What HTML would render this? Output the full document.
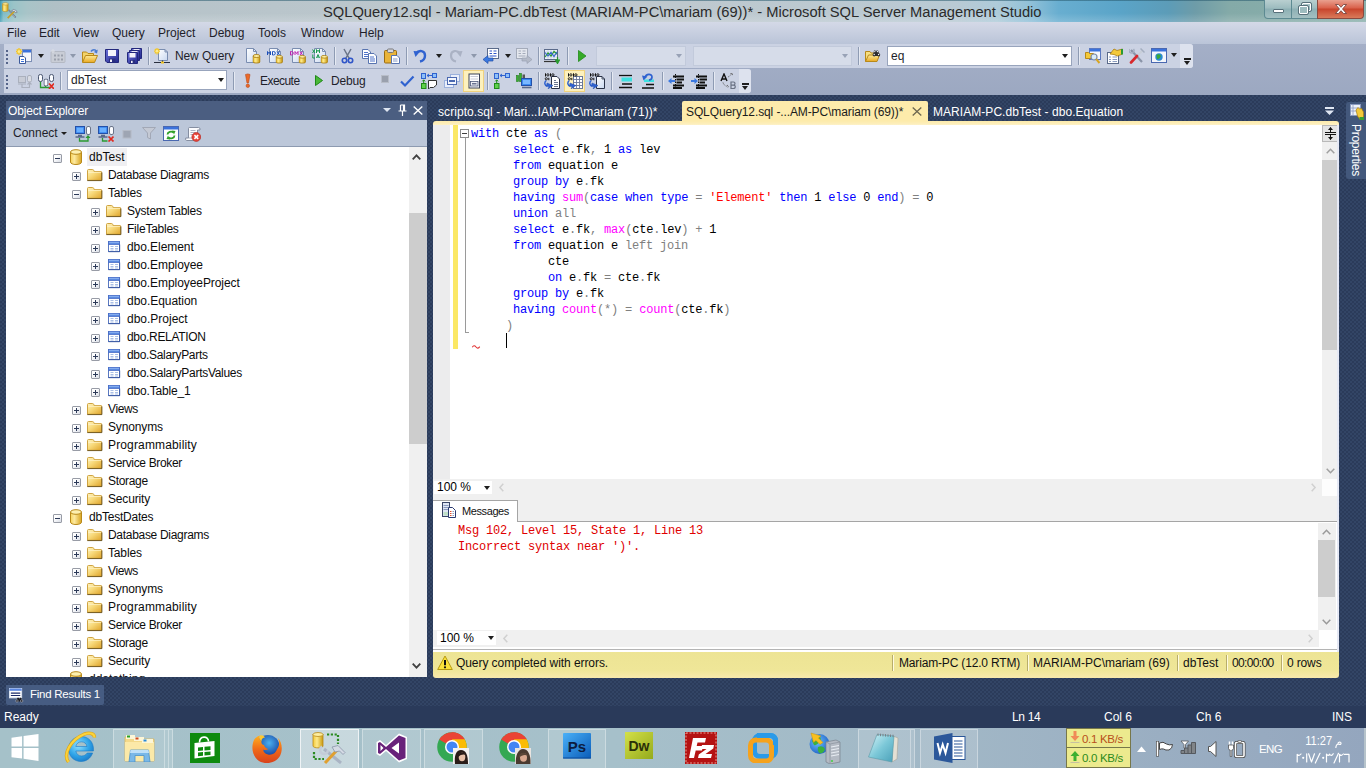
<!DOCTYPE html>
<html>
<head>
<meta charset="utf-8">
<title>SQLQuery12.sql - Microsoft SQL Server Management Studio</title>
<style>
*{box-sizing:border-box;margin:0;padding:0}
html,body{width:1366px;height:768px;overflow:hidden}
body{font-family:"Liberation Sans",sans-serif;font-size:11.5px;color:#1b1b1b;position:relative;background:#2b3b5a}
.a,.a *{position:absolute}
svg{display:block;overflow:visible}
.s{white-space:nowrap;line-height:16px}
#dots{left:0;top:95px;width:1366px;height:611px;background-color:#2b3b5a;
 background-image:radial-gradient(circle at 1px 1px,#384b6e 0.5px,transparent 1px),radial-gradient(circle at 3px 3px,#384b6e 0.5px,transparent 1px);background-size:4px 4px}
/* title bar */
#title{left:0;top:0;width:1366px;height:22px;background:linear-gradient(rgba(40,90,110,.55) 0,rgba(40,90,110,.55) 1px,rgba(255,255,255,0) 1px,rgba(255,255,255,0) 60%,rgba(255,255,255,.18) 100%),linear-gradient(90deg,#3f9ab2 0,#7fbcc6 .25%,#9ac4c8 1%,#a8c4c8 2%,#b0c0c6 4%,#b6c3c9 10%,#bcc7cd 30%,#bec8ce 50%,#b9cad4 70%,#aecbd9 73%,#8fc0d8 75.5%,#68aed0 77.5%,#5aa4c8 82%,#5c9cb8 85.5%,#6e9ca8 87.5%,#84aaa8 90%,#8ab0ac 100%)}
#title .t{left:323px;top:2px;font-size:14.7px;color:#2a2a2a;line-height:20px;white-space:nowrap}
/* menu */
#menu{left:0;top:22px;width:1366px;height:22px;background:linear-gradient(#d4d9e7,#bac4d8)}
#menu span{top:3px;font-size:12px;color:#1e1e2a;line-height:16px;white-space:nowrap}
#tray{left:0;top:44px;width:1366px;height:51px;background:linear-gradient(#a4afc7,#9ca8c1)}
.tb{background:#cbd2e3;border-radius:0 3px 3px 0;height:24px}
.grip{width:2px;height:14px;top:6px;left:2px;background-image:linear-gradient(#55648a 2px,transparent 2px);background-size:2px 4px;}
.sep{width:1px;height:18px;top:3px;background:#8e9bb3;box-shadow:1px 0 0 #e6eaf3}
.combo{background:#fff;border:1px solid #98a4bc;height:20px;top:2px}
.combo.dis{background:#d6dce9;border-color:#c2cadb}
.ddarrow{width:0;height:0;border:3.5px solid transparent;border-top:4px solid #1e1e1e;border-bottom:0}
.tbtxt{top:4px;font-size:12px;line-height:16px;white-space:nowrap;color:#1e1e2a}
.hot{background:#fdf1bd;border:1px solid #f0d27e}
/* object explorer */
#oe{left:6px;top:101px;width:421px;height:576px;background:#fff;overflow:hidden}
#oehead{left:0;top:0;width:421px;height:19px;background:#4b5e81;color:#fff}
#oetb{left:0;top:19px;width:421px;height:27px;background:#bcc7d9;border-bottom:1px solid #8d9ab0}
.row{left:0;height:18px;width:400px}
.row span{top:1px;line-height:16px;white-space:nowrap;font-size:12px;color:#0c0c0c}
.pm{width:9px;height:9px;border:1px solid #989ca6;background:linear-gradient(135deg,#fff 30%,#d9dde6);border-radius:1px;top:6px}
.pm:before{content:"";position:absolute;left:1px;top:3px;width:5px;height:1px;background:#2c3a58}
.pm.p:after{content:"";position:absolute;left:3px;top:1px;width:1px;height:5px;background:#2c3a58}
.ic{top:1px;width:16px;height:16px}
/* editor */
.mono{font-family:"Liberation Mono",monospace}
#code div{left:38px;height:16px;line-height:16px;font-size:12px;letter-spacing:-0.2px;white-space:pre;color:#000}
.k{color:#0000ff}.g{color:#808080}.f{color:#ff00ff}.r{color:#ff0000}
#msg div{left:25px;height:15px;line-height:15px;font-size:12px;letter-spacing:-0.2px;white-space:pre;color:#e00000}
.sbtn{background:#f0f0f0}
.st span{top:3px;line-height:16px;white-space:nowrap;font-size:12px;color:#111}
.st i{top:3px;width:1px;height:16px;background:#b8ad6a;box-shadow:1px 0 0 #fffbe0}
/* taskbar */
#task{left:0;top:728px;width:1366px;height:40px;background:linear-gradient(90deg,#a5c1c9,#a6c0ca 45%,#a1b7c6 70%,#9aaec2 85%,#94a6be)}
.tbtn{top:1px;height:39px;background:rgba(255,255,255,.13);border:1px solid rgba(255,255,255,.35);border-bottom:0}
#code span{position:static}

</style>
</head>
<body>
<svg width="0" height="0" style="position:absolute">
<defs>
<linearGradient id="gfold" x1="0" y1="0" x2="1" y2="1"><stop offset="0" stop-color="#fff4c0"/><stop offset=".45" stop-color="#f7d878"/><stop offset="1" stop-color="#dfa42c"/></linearGradient>
<linearGradient id="gdb" x1="0" y1="0" x2="1" y2="0"><stop offset="0" stop-color="#f7d35a"/><stop offset=".35" stop-color="#fdeaa0"/><stop offset="1" stop-color="#d9a520"/></linearGradient>
<symbol id="folder" viewBox="0 0 16 16"><path d="M0.500 14.300 V4.500 Q0.500 3.500 1.500 3.500 H5.500 Q6.500 3.500 6.800 4.500 L7 5.500 H14 Q14.600 5.500 14.600 6.300 V14.300 Z" fill="url(#gfold)" stroke="#c99a30" stroke-width=".9"/><path d="M1.200 6.300 H14" stroke="#fff6cf" stroke-width=".9" opacity=".9"/><path d="M0.300 14.600 H14.900 V6.500" fill="none" stroke="#4a3608" stroke-width=".9" opacity=".8"/></symbol>
<symbol id="db" viewBox="0 0 16 16"><path d="M2.5 3 v10 c0 1.6 2.4 2.5 5.5 2.5 s5.500 -.9 5.500 -2.500 v-10" fill="url(#gdb)" stroke="#b8891a" stroke-width="1"/><ellipse cx="8" cy="3" rx="5.500" ry="2.300" fill="#fdf0b0" stroke="#b8891a" stroke-width="1"/></symbol>
<symbol id="table" viewBox="0 0 16 16"><rect x="2.500" y="3.500" width="11" height="10" fill="#fff" stroke="#5a78c0"/><rect x="2.500" y="3.500" width="11" height="3" fill="#5a8ae0" stroke="#4a6ec8" stroke-width=".8"/><path d="M3 4.300 H13" stroke="#9cc0f8" stroke-width=".8"/><path d="M4.500 8.500 H7.500 M9 8.500 H12 M4.500 10.500 H7.500 M9 10.500 H12 M4.500 12 H7.500 M9 12 H12" stroke="#a9bfe6" stroke-width="1"/><path d="M2.500 13.700 H13.700 V6.500" fill="none" stroke="#34509a" stroke-width=".8"/></symbol>
<symbol id="appicon" viewBox="0 0 18 18"><path d="M0.500 2 V9 C0.500 10.500 6.500 10.500 6.500 9 V2" fill="url(#gcyl)" stroke="#b8891a" stroke-width=".6"/><ellipse cx="3.500" cy="2" rx="3" ry="1.200" fill="#fdeea0" stroke="#b8891a" stroke-width=".6"/><path d="M7 8.500 L14.500 16.500" stroke="#5a6478" stroke-width="1.500"/><path d="M7.300 8.800 L14.200 16.200" stroke="#e8ecf4" stroke-width=".6"/><path d="M14 9 L6 17" stroke="#c8a028" stroke-width="1.800"/><path d="M10 9.500 Q12 6.500 15 9 L16 11 L14.500 11.500 L13.500 10 Z" fill="#e4e8f0" stroke="#5a6478" stroke-width=".6"/></symbol>
<symbol id="msgicon" viewBox="0 0 16 16"><rect x="1.500" y="0.500" width="7" height="14" fill="#dfe6f4" stroke="#3a4668"/><path d="M2.500 3.500 H7.500 M2.500 5.500 H7.500 M2.500 7.500 H7.500" stroke="#8a9abf" stroke-width="1"/><rect x="2.500" y="10" width="5" height="3.500" fill="#bfe0c8"/><path d="M7.500 5.500 H11.500 L14.500 8.500 V15.500 H7.500 Z" fill="#fff" stroke="#2a3a70"/><path d="M9 9.500 H10.500 M9 11.500 H10.500 M9 13.500 H10.500" stroke="#e0502a" stroke-width="1"/><path d="M11.500 9.500 H13 M11.500 11.500 H13 M11.500 13.500 H13" stroke="#8a9abf" stroke-width="1"/></symbol>
<symbol id="propicon" viewBox="0 0 16 16"><rect x="1.500" y="0.500" width="10" height="11" fill="#eef2fa" stroke="#8a9ac0"/><path d="M4 1 V11 M1.500 4 H11.500 M1.500 7 H11.500" stroke="#8a9ac0" stroke-width=".8"/><path d="M7 6 L9 3.500 L10.500 5 L12.500 4.500 L14.500 8 V13 L11 15.500 L8.500 12 Z" fill="#f3c93a" stroke="#a87c10" stroke-width=".7"/><rect x="10.500" y="13" width="4.500" height="3" fill="#3aa030"/></symbol>
<symbol id="findres" viewBox="0 0 16 16"><rect x="0.500" y="0.500" width="13" height="10" fill="#fff" stroke="#dfe6f2"/><rect x="0.500" y="0.500" width="13" height="2.500" fill="#5a86e0"/><path d="M2 5.500 H12 M2 8 H12" stroke="#1a2a6a" stroke-width="1.200"/><path d="M7.500 14.500 L9 10.500 H10.500 L11 12 L11.500 10.500 H13 L14.500 14.500 Z" fill="#1a1a20"/><circle cx="8.500" cy="13.800" r="1.300" fill="#1a1a20" stroke="#dfe6f2" stroke-width=".5"/><circle cx="13.500" cy="13.800" r="1.300" fill="#1a1a20" stroke="#dfe6f2" stroke-width=".5"/></symbol>
<symbol id="tflag" viewBox="0 0 18 18"><path d="M1.500 1 V16.500" stroke="#444" stroke-width="3"/><path d="M1.500 1.500 V16" stroke="#fff" stroke-width="1.600"/><path d="M3.500 3 Q7 1 10.500 4 Q13.500 5.500 16.500 4.500 Q16.500 8.500 13 10 Q9.500 10.500 7.500 9 Q5.500 8.500 3.500 9.500 Z" fill="#fff" stroke="#444" stroke-width="1"/></symbol>
<symbol id="tnet" viewBox="0 0 18 16"><path d="M1 13.500 V10.500 H4.500 V8 H8 V5 H11.500 V2.500 H15.500 V13.500 Z" fill="#808488" stroke="#55595e" stroke-width="1"/><path d="M4.500 10.500 V13.500 M8 8 V13.500 M11.500 5 V13.500" stroke="#55595e" stroke-width="1"/><path d="M1 1 H8.500 L5.500 4.500 V8 H4 V4.500 Z" fill="#fff" stroke="#55595e" stroke-width=".8"/></symbol>
<symbol id="tvol" viewBox="0 0 12 18"><path d="M1.500 6.500 H3.500 L9 1.500 V16.500 L3.500 11.500 H1.500 Z" fill="#fff" stroke="#555" stroke-width="1"/></symbol>
<symbol id="tpow" viewBox="0 0 18 18"><rect x="7.500" y="2.500" width="8.500" height="14" rx="1" fill="none" stroke="#444" stroke-width="3"/><rect x="7.500" y="2.500" width="8.500" height="14" rx="1" fill="none" stroke="#fff" stroke-width="1.600"/><rect x="10" y="0.800" width="3.500" height="1.700" fill="#fff" stroke="#444" stroke-width=".6"/><path d="M1.500 1.500 V5 M4.500 1.500 V5" stroke="#fff" stroke-width="1.500"/><path d="M0.500 5 H5.500 V8.500 Q5.500 10 3.800 10 V16.500 H2.200 V10 Q0.500 10 0.500 8.500 Z" fill="#fff" stroke="#444" stroke-width=".7"/></symbol>
<symbol id="clock" viewBox="0 0 58 34"><text x="11.200" y="12.800" font-family="Liberation Sans" font-size="12" fill="#fff" textLength="27" lengthAdjust="spacingAndGlyphs">11:27</text><path d="M47 12 Q47.300 10 45.500 10 Q43.800 10.200 44 12 Q45 12.600 47.200 12.200 M44 12 Q42 12.500 41.800 16" fill="none" stroke="#fff" stroke-width="1.100"/><g fill="none" stroke="#fff" stroke-width="1.200" stroke-linecap="round" stroke-linejoin="round"><path d="M3.200 30 V22.300 Q5 24.500 7 22"/><path d="M12.700 21.800 V30"/><path d="M14.600 21.800 L17.500 30 L20.500 21.800"/><path d="M26 21.300 L21.300 31"/><path d="M32.500 30 V22 Q34 24.800 35.700 22.200 Q37.300 24.800 39.200 21.700"/><path d="M44.500 21.300 L40 31"/><path d="M45.500 30 V22.300 Q47.300 24.500 49.300 22"/><path d="M50.500 22.400 H55 V30"/></g><circle cx="9.200" cy="25.800" r="1.100" fill="#fff"/><circle cx="29.200" cy="25.800" r="1.100" fill="#fff"/></symbol>
<symbol id="monitor" viewBox="0 0 10 12"><rect x="0.500" y="0.500" width="9" height="7" fill="#3b8af0" stroke="#2450a8"/><rect x="1.800" y="1.800" width="6.400" height="4.400" fill="#6ab0ff"/><path d="M3 9.500 H7 M0.500 11 H9.500" stroke="#5a6a8a" stroke-width="1.300"/></symbol>
<symbol id="oeconn" viewBox="0 0 16 16"><use href="#monitor" x="0" y="0" width="10" height="12"/><rect x="11.500" y="0.500" width="4" height="8" rx="1.500" fill="#fbfcff" stroke="#6a7488"/><path d="M4.500 12 V15 H13 V11" fill="none" stroke="#2a9a30" stroke-width="1.300"/><path d="M10.500 12 L13 9 L15.500 12 Z" fill="#2a9a30"/></symbol>
<symbol id="oedisc" viewBox="0 0 16 16"><use href="#monitor" x="0" y="0" width="10" height="12"/><rect x="11.500" y="0.500" width="4" height="8" rx="1.500" fill="#fbfcff" stroke="#6a7488"/><path d="M4.500 12 V15 H9.500" fill="none" stroke="#2a9a30" stroke-width="1.300"/><path d="M10.500 10.500 L15.500 15.500 M15.500 10.500 L10.500 15.500" stroke="#e02a20" stroke-width="1.700"/></symbol>
<symbol id="oestop" viewBox="0 0 16 16"><rect x="4" y="4.500" width="8" height="7.500" fill="#9ea5b3" stroke="#b4bac6"/></symbol>
<symbol id="oefilter" viewBox="0 0 16 16"><path d="M1.500 1.500 H14.500 L9.500 7 V13 L6.500 11.500 V7 Z" fill="#c4c9d4" stroke="#a2a8b6" stroke-linejoin="round"/></symbol>
<symbol id="oerefresh" viewBox="0 0 16 16"><rect x="0.500" y="0.500" width="15" height="14" fill="#fdfdff" stroke="#4a68b0"/><rect x="1" y="1" width="14" height="2.500" fill="#3b72dc"/><path d="M4.500 8.500 A3.500 3 0 0 1 10.500 6.500" fill="none" stroke="#2fa028" stroke-width="1.800"/><path d="M9 4.500 L12.500 5 L11 8.500 Z" fill="#2fa028"/><path d="M11.500 9.500 A3.500 3 0 0 1 5.500 11.500" fill="none" stroke="#2fa028" stroke-width="1.800"/><path d="M7 13.500 L3.500 13 L5 9.500 Z" fill="#2fa028"/></symbol>
<symbol id="oescript" viewBox="0 0 16 16"><path d="M4.500 1.500 H13.500 Q15.500 1.500 15 4 H12.500 V12.500 Q12.500 14.500 10.500 14.500 H1.500 Q0.300 14.500 0.700 12 H3.500 V2.500 Q3.500 1.500 4.500 1.500 Z" fill="#fcfcfe" stroke="#7a8498" stroke-width=".9"/><path d="M3.500 12 H10.500 Q10.200 13.500 10.800 14.300" fill="none" stroke="#9aa2b4" stroke-width=".8"/><path d="M5.500 4.500 H10.500 M5.500 6.500 H10.500 M5.500 8.500 H9" stroke="#a4acbc" stroke-width=".9"/><circle cx="11.300" cy="11" r="4.400" fill="#e8453a" stroke="#b82a22" stroke-width=".7"/><path d="M9.400 9.100 L13.200 12.900 M13.200 9.100 L9.400 12.900" stroke="#fff" stroke-width="1.500"/></symbol>
<radialGradient id="gie" cx=".4" cy=".35" r=".7"><stop offset="0" stop-color="#8fe0ff"/><stop offset=".6" stop-color="#2fa4e8"/><stop offset="1" stop-color="#1a7ac8"/></radialGradient>
<radialGradient id="gffg" cx=".55" cy=".35" r=".6"><stop offset="0" stop-color="#4ab0f0"/><stop offset="1" stop-color="#143c9a"/></radialGradient>
<linearGradient id="gfff" x1="0" y1="0" x2="0" y2="1"><stop offset="0" stop-color="#ffb020"/><stop offset=".5" stop-color="#f06a18"/><stop offset="1" stop-color="#d8421c"/></linearGradient>
<symbol id="winlogo" viewBox="0 0 28 28"><path d="M0 4 L11 2.300 V13 H0 Z M12.500 2 L28 0 V13 H12.500 Z M0 14.500 H11 V25.500 L0 24 Z M12.500 14.500 H28 V28 L12.500 25.700 Z" fill="#fff"/></symbol>
<symbol id="ie" viewBox="0 0 34 33"><path d="M29.400 20 L11.800 20 C12.300 23 14.500 25 17.500 25 C20 25 22 24 23.200 22 L28.600 22 C26.800 27.200 22.500 30.500 17 30.500 C10 30.500 4.500 25 4.500 18 C4.500 11 10 5.500 17 5.500 C24.500 5.500 29.500 11 29.500 18.500 Z M11.800 15.500 C12.300 12.500 14.500 10.800 17.300 10.800 C20.300 10.800 22.500 12.500 23 15.500 Z" fill="url(#gie)" fill-rule="evenodd" stroke="#1a7ac8" stroke-width=".6"/><path d="M4.500 31 C-1.500 23 7 8.500 20 3.200 C26 1 30.500 2.500 30.500 6.500" fill="none" stroke="#e0a818" stroke-width="3.400"/><path d="M4.500 31 C-1.500 23 7 8.500 20 3.200 C26 1 30.500 2.500 30.500 6.500" fill="none" stroke="#fbd23a" stroke-width="2"/></symbol>
<symbol id="explorer" viewBox="0 0 33 28"><path d="M2 3 H10 L12 5 H31 V27 H2 Z" fill="#f3d98a" stroke="#d9b860" stroke-width=".8"/><path d="M2 8 H31 V27 H2 Z" fill="#fbe9a8"/><path d="M3 1 H12 V5 H3 Z" fill="#fdf6d8"/><path d="M11 3 H21 V7 H11 Z" fill="#fdf6d8"/><path d="M19 5 H30 V9 H19 Z" fill="#fdf6d8"/><rect x="4" y="1.500" width="3" height="2" fill="#28a028"/><rect x="12.500" y="3.500" width="3" height="2" fill="#d04a20"/><rect x="20.500" y="5.500" width="3" height="2" fill="#2a8ad8"/><path d="M6 28 L7.500 16 H25.500 L27 28 H21 V21.500 H12 V28 Z" fill="#7ab8e8" stroke="#4a90c8" stroke-width=".8"/><path d="M7.500 16 H25.500 L26 19 H7 Z" fill="#bfe0f8"/></symbol>
<symbol id="store" viewBox="0 0 30 30"><rect width="30" height="30" fill="#0e8a0e"/><path d="M4.500 10 L24.500 8 V23 L4.500 25.500 Z" fill="#fff"/><path d="M9.500 9.500 C9.500 2.500 18.500 2.500 18.500 8.500" fill="none" stroke="#fff" stroke-width="1.600"/><path d="M8 14.500 L13 14 V17.500 L8 18 Z M14.500 13.800 L20.500 13.200 V17 L14.500 17.400 Z M8 19.500 L13 19 V22.700 L8 23.200 Z M14.500 18.900 L20.500 18.500 V22 L14.500 22.600 Z" fill="#0e8a0e"/></symbol>
<symbol id="firefox" viewBox="0 0 32 32"><circle cx="17" cy="14.500" r="11.500" fill="url(#gffg)"/><path d="M3 8 C0 15 1 24 8 29 C15 33 25 31 29 24 C32 18 31 10 27 6 C29 11 28 15 26 17 C25 21 21 23.500 17 22.500 C13 21.500 12 19 12.500 17.500 C14 18.500 16 18 17.500 17 C15 16.500 13.500 15 13 13 C11 13 10 11 10.500 9 C8.500 8 8 5.500 9 3.500 C6 4.500 4 6 3 8 Z" fill="url(#gfff)"/><path d="M9 3.500 C11 3 13 4 14 5.500 C12 5.500 10.500 7 10.500 9 C8.500 8 8 5.500 9 3.500 Z" fill="#ffc830"/></symbol>
<symbol id="ssms" viewBox="0 0 34 32"><path d="M1 2 V14 C1 16.500 11 16.500 11 14 V2" fill="url(#gcyl)" stroke="#b8891a" stroke-width=".8"/><ellipse cx="6" cy="2.500" rx="5" ry="2" fill="#fdeea0" stroke="#b8891a" stroke-width=".8"/><path d="M15 2.500 H26 V12 M2 20 V27 H12" fill="none" stroke="#2a8a20" stroke-width="2.200" stroke-dasharray="2.200 1.600"/><path d="M12 17 L29 31" stroke="#aab4c4" stroke-width="3"/><path d="M10 14.500 A4 4 0 1 0 16 18" fill="none" stroke="#c4ccd8" stroke-width="2.500"/><path d="M27 16 L13 31" stroke="#e0a030" stroke-width="3"/><path d="M20 15 L26 13.500 L33 20.500 L31 22.500 L27.500 19 L23 20 Z" fill="#d4dae4" stroke="#8a94a8" stroke-width=".8"/></symbol>
<symbol id="vs" viewBox="0 0 32 30"><path d="M23 0.500 L31 4 V26 L23 29.500 L10 18 L4 23 L0.500 21 V9 L4 7 L10 12 Z" fill="#fff"/><path d="M23 2.500 L29.500 5 V25 L23 27.500 L10 16 L4 21 L2 20 V10 L4 9 L10 14 Z M23 9.500 L15.500 15 L23 20.500 Z M4.500 12 V18 L7.500 15 Z" fill="#68217a" fill-rule="evenodd"/></symbol>
<symbol id="chrome" viewBox="0 0 32 32"><circle cx="15" cy="15" r="14.800" fill="#34a853"/><path d="M15 15 L2.200 7.600 A14.800 14.800 0 0 1 27.800 7.600 Z" fill="#ea4335"/><path d="M15 0.200 A14.800 14.800 0 0 1 27.800 7.600 L15 7.600 Z" fill="#ea4335"/><path d="M27.800 7.600 A14.800 14.800 0 0 1 16 29.800 L22 17 L15 7.600 Z" fill="#fbbc05"/><path d="M15 7.600 H27.800 L22 18 Z" fill="#fbbc05"/><circle cx="15" cy="15" r="7" fill="#fff"/><circle cx="15" cy="15" r="5.500" fill="#4285f4"/></symbol>
<symbol id="avatar1" viewBox="0 0 16 16"><rect width="16" height="16" fill="#f4f2f0"/><path d="M2 16 C1 8 3 2 8 2 C13 2 15 7 15 16 Z" fill="#2a1c18"/><ellipse cx="9" cy="9" rx="3.300" ry="4.200" fill="#e8c0a8"/><path d="M5 7 C6 4 11 3.500 13 7 C11 6 8 6 5 9 Z" fill="#2a1c18"/></symbol>
<symbol id="avatar2" viewBox="0 0 16 16"><rect width="16" height="16" fill="#e8e4e0"/><path d="M1 16 C0 8 3 1 8 1 C13 1 16 7 15.500 16 Z" fill="#4a3a30"/><ellipse cx="8.500" cy="9.500" rx="3.500" ry="4.300" fill="#d8a890"/><path d="M4 8 C5 4 11 3.500 13 8 C11 6.500 7 6.500 4 10 Z" fill="#5a4638"/></symbol>
<linearGradient id="gps" x1="0" y1="0" x2="1" y2="1"><stop offset="0" stop-color="#4ab0f8"/><stop offset="1" stop-color="#0a5cb8"/></linearGradient>
<linearGradient id="gdw" x1="0" y1="0" x2="1" y2="1"><stop offset="0" stop-color="#d4e048"/><stop offset="1" stop-color="#94aa1c"/></linearGradient>
<linearGradient id="gnp" x1="0" y1="0" x2="1" y2="1"><stop offset="0" stop-color="#d8f4f8"/><stop offset=".5" stop-color="#7cc8d8"/><stop offset="1" stop-color="#4aa0b8"/></linearGradient>
<radialGradient id="gglobe" cx=".4" cy=".4" r=".7"><stop offset="0" stop-color="#6ac0ff"/><stop offset="1" stop-color="#1a5ac0"/></radialGradient>
<symbol id="ps" viewBox="0 0 28 28"><rect width="28" height="25.500" rx="1" fill="url(#gps)"/><rect y="24" width="28" height="2" fill="#0a4a9a" opacity=".5"/><text x="14" y="18.500" font-family="Liberation Sans" font-weight="bold" font-size="15" text-anchor="middle" fill="#0c1c40">Ps</text></symbol>
<symbol id="dw" viewBox="0 0 28 28"><rect x="-0.500" width="29" height="27" rx="1" fill="url(#gdw)"/><text x="14" y="19" font-family="Liberation Sans" font-weight="bold" font-size="15" text-anchor="middle" fill="#2a3008" textLength="21" lengthAdjust="spacingAndGlyphs">Dw</text></symbol>
<symbol id="fz" viewBox="0 0 32 32"><rect width="32" height="32" fill="#b41212"/><rect x="1" y="1" width="30" height="30" fill="none" stroke="#e89a90" stroke-width="1" stroke-dasharray="2 1.500"/><path d="M8 6 H21 L20 10.500 H12.500 L11.700 14 H18 L17 18.500 H10.700 L9 26 H4 Z" fill="#fff"/><path d="M17 13 H29 L28.300 16.500 L20.500 22 H27 L26 26 H13 L13.800 22.500 L21.500 17 H16 Z" fill="#fff"/></symbol>
<symbol id="vmware" viewBox="0 0 30 30"><rect x="6.500" y="2.500" width="21" height="21" rx="5.500" fill="none" stroke="#2a9ae8" stroke-width="5"/><rect x="2.500" y="7" width="21" height="21" rx="5.500" fill="none" stroke="#f5a21c" stroke-width="5"/><path d="M9 2.500 H22 Q27.500 2.500 27.500 8 V12" fill="none" stroke="#2a9ae8" stroke-width="5"/></symbol>
<symbol id="globe" viewBox="0 0 32 32"><circle cx="10.500" cy="12" r="10" fill="url(#gglobe)"/><path d="M3 9 Q6 4 11 5 Q13 8 10 10 Q8 14 5 13 Z M9 15 Q14 13 16 17 Q15 21 11 21.500 Q8 19 9 15 Z" fill="#3ab040"/><path d="M2 1 L12 4 L9.500 6 L14 10.500 L11 12.500 L7 8.500 L4.500 10.500 Z" fill="#f8c020" stroke="#c89010" stroke-width=".5"/><path d="M17 10 L27 8 L31 10 V30 L21 32 L17 30 Z" fill="#b4bac4" stroke="#7a828e" stroke-width=".7"/><path d="M17 10 L21 12 V32 M21 12 L31 10" fill="none" stroke="#8a929e" stroke-width=".7"/><path d="M22 15 L30 13.500 M22 18 L30 16.500 M22 21 L30 19.500 M22 24 L30 22.500" stroke="#e8ecf2" stroke-width="1.200"/><circle cx="23" cy="29" r="1" fill="#40d040"/></symbol>
<symbol id="notepad" viewBox="0 0 32 30"><path d="M25 3 L30 5 L29 26 L24 29 Z" fill="#e4e0d4" stroke="#a8a498" stroke-width=".6"/><path d="M9 1.500 L26 3 L24 29 L0.500 24 Z" fill="url(#gnp)" stroke="#5a9aa8" stroke-width=".6"/><path d="M10 0.500 V3 M12.500 0.700 V3.200 M15 0.900 V3.400 M17.500 1.100 V3.600 M20 1.300 V3.800 M22.500 1.500 V4 M25 1.700 V4.200" stroke="#7a8288" stroke-width="1"/></symbol>
<symbol id="word" viewBox="0 0 32 30"><rect x="14" y="3.500" width="17" height="23" fill="#fff" stroke="#2b579a" stroke-width="1"/><path d="M20 8 H28.500 M20 11 H28.500 M20 14 H28.500 M20 17 H28.500 M20 20 H28.500 M20 23 H28.500" stroke="#2b579a" stroke-width="1.200"/><path d="M0 3.500 L18.500 0 V30 L0 26.500 Z" fill="#2b579a"/><path d="M3.500 10 L6 20 L8.700 11.500 L11.500 20 L14 10" fill="none" stroke="#fff" stroke-width="2"/></symbol>
<linearGradient id="gflop" x1="0" y1="0" x2="1" y2="1"><stop offset="0" stop-color="#6a70d8"/><stop offset="1" stop-color="#23288c"/></linearGradient>
<linearGradient id="gopen" x1="0" y1="0" x2="0" y2="1"><stop offset="0" stop-color="#fdeb9c"/><stop offset="1" stop-color="#e9a820"/></linearGradient>
<symbol id="newproj" viewBox="0 0 16 16"><rect x="6.500" y="1.500" width="9" height="12" fill="#f4f6fb" stroke="#7d8fb5"/><rect x="7" y="2" width="8" height="2.500" fill="#3b72dc"/><path d="M3 0 V7 M0 3.500 H6 M0.800 1.300 L5.200 5.700 M5.200 1.300 L0.800 5.700" stroke="#f5c51e" stroke-width="1.300"/><circle cx="3" cy="3.500" r="1.500" fill="#fde98a"/><path d="M3.500 8.500 H8 L9.500 10 V15.500 H3.500 Z" fill="#fff" stroke="#3c5a9a"/><path d="M5 11.500 H8 M5 13.500 H8" stroke="#3b72dc" stroke-width="1"/></symbol>
<symbol id="additem" viewBox="0 0 16 16"><rect x="1" y="3.500" width="14" height="11" rx="1" fill="#c9cdd6" stroke="#b4b9c4"/><path d="M3 1 V5 M1 3 H5" stroke="#d9dce3" stroke-width="1.200"/><g fill="#9a9fab"><rect x="4" y="6.500" width="2" height="2"/><rect x="7.500" y="6.500" width="2" height="2"/><rect x="11" y="6.500" width="2" height="2"/><rect x="4" y="10.500" width="2" height="2"/><rect x="7.500" y="10.500" width="2" height="2"/><rect x="11" y="10.500" width="2" height="2"/></g></symbol>
<symbol id="open" viewBox="0 0 16 16"><path d="M0.500 14 V4 H4.500 L6 5.500 H11.500 V8" fill="#f3d36a" stroke="#b8891a"/><path d="M0.500 14.500 L3.500 7.500 H15.500 L12.500 14.500 Z" fill="url(#gopen)" stroke="#b8891a" stroke-linejoin="round"/><path d="M9 3.500 C10.500 1 13.500 1 14.500 3.500" fill="none" stroke="#4a7bd0" stroke-width="1.500"/><path d="M15.800 1.500 L15 5.500 L11.800 4 Z" fill="#4a7bd0"/></symbol>
<symbol id="save" viewBox="0 0 16 16"><path d="M1.500 1.500 H14.500 V14.500 H3 L1.500 13 Z" fill="url(#gflop)" stroke="#23287c"/><rect x="4" y="2" width="8" height="6" fill="#f4f4fb"/><rect x="5" y="10.500" width="6.500" height="4" fill="#2a2f80"/><rect x="6" y="11.500" width="2" height="2.500" fill="#f4f4fb"/></symbol>
<symbol id="saveall" viewBox="0 0 16 16"><path d="M5.500 0.500 H15.500 V10.500 H5.500 Z" fill="url(#gflop)" stroke="#23287c"/><rect x="7.500" y="1" width="6" height="3" fill="#e9e9f6"/><path d="M3.500 2.500 H13.500 V12.500 H3.500 Z" fill="url(#gflop)" stroke="#23287c"/><rect x="5.500" y="3" width="6" height="3" fill="#e9e9f6"/><path d="M1.500 4.500 H11.500 V15.500 H2.800 L1.500 14.200 Z" fill="url(#gflop)" stroke="#23287c"/><rect x="3.500" y="5" width="6" height="4.500" fill="#f4f4fb"/><rect x="4" y="12" width="5" height="3.500" fill="#2a2f80"/><rect x="5" y="12.800" width="1.600" height="2.200" fill="#f4f4fb"/></symbol>
<linearGradient id="gdoc" x1="0" y1="0" x2="1" y2="1"><stop offset="0" stop-color="#ffffff"/><stop offset="1" stop-color="#c9d8f0"/></linearGradient>
<linearGradient id="gcyl" x1="0" y1="0" x2="1" y2="0"><stop offset="0" stop-color="#f3c93a"/><stop offset=".4" stop-color="#fde98a"/><stop offset="1" stop-color="#c99a10"/></linearGradient>
<symbol id="smallcyl" viewBox="0 0 8 10"><path d="M0.500 2 V8 C0.500 9.300 7.500 9.300 7.500 8 V2" fill="url(#gcyl)" stroke="#a87c10" stroke-width=".9"/><ellipse cx="4" cy="2" rx="3.500" ry="1.500" fill="#fdeea0" stroke="#a87c10" stroke-width=".9"/></symbol>
<symbol id="newquery" viewBox="0 0 16 16"><path d="M4.500 1.500 H11 L13.500 4 V12.500 H4.500 Z" fill="url(#gdoc)" stroke="#7a8db0"/><path d="M11 1.500 V4 H13.500" fill="none" stroke="#7a8db0"/><path d="M3 0 V6.400 M0 3.200 H6 M0.900 1 L5.100 5.400 M5.100 1 L0.900 5.400" stroke="#f5c51e" stroke-width="1.200"/><circle cx="3" cy="3.200" r="1.400" fill="#fdea8c"/><path d="M0 14.500 H16 M8.500 12.500 V14.500" stroke="#2a3040" stroke-width="1"/><rect x="7" y="13.500" width="3" height="2" fill="#f2c420"/></symbol>
<symbol id="docdb" viewBox="0 0 16 16"><path d="M1.500 0.500 H8.500 L11.500 3.500 V14.500 H1.500 Z" fill="url(#gdoc)" stroke="#7a8db0"/><path d="M8.500 0.500 V3.500 H11.500" fill="none" stroke="#7a8db0"/><use href="#smallcyl" x="7.500" y="6" width="8" height="10"/></symbol>
<symbol id="docq" viewBox="0 0 16 16"><path d="M2.500 0.500 H10.500 L13.500 3.500 V14.500 H2.500 Z" fill="url(#gdoc)" stroke="#7a8db0"/><path d="M10.500 0.500 V3.500 H13.500" fill="none" stroke="#7a8db0"/><use href="#smallcyl" x="8.500" y="7" width="7.500" height="9"/></symbol>
<symbol id="mdx" viewBox="0 0 16 16"><use href="#docq" width="16" height="16"/><path d="M0.500 7 V3.500 L2 5.500 L3.500 3.500 V7 M5.500 3.500 V7 H6.500 Q8.300 7 8.300 5.200 Q8.300 3.500 6.500 3.500 Z M10 3.500 L12.500 7 M12.500 3.500 L10 7" fill="none" stroke="#1c4fb8" stroke-width="1"/></symbol>
<symbol id="dmx" viewBox="0 0 16 16"><use href="#docq" width="16" height="16"/><path d="M0.500 3.500 V7 H1.500 Q3.300 7 3.300 5.200 Q3.300 3.500 1.500 3.500 Z M5 7 V3.500 L6.500 5.500 L8 3.500 V7 M10 3.500 L12.500 7 M12.500 3.500 L10 7" fill="none" stroke="#c020b0" stroke-width="1"/></symbol>
<symbol id="xmla" viewBox="0 0 16 16"><use href="#docq" width="16" height="16"/><path d="M0.500 1.500 L3 5 M3 1.500 L0.500 5 M4.500 5 V1.500 L6 3.500 L7.500 1.500 V5 M0.800 6.500 V10 H3 M4.500 10 L6 6.500 L7.500 10 M5 9 H7" fill="none" stroke="#1a9a50" stroke-width="1"/></symbol>
<symbol id="cut" viewBox="0 0 16 16"><path d="M4 1 L9 10 M11 1 L6 10" stroke="#6a7488" stroke-width="1.500" fill="none"/><circle cx="4.500" cy="12.500" r="2.200" fill="none" stroke="#2f55c8" stroke-width="1.600"/><circle cx="10.500" cy="12.500" r="2.200" fill="none" stroke="#2f55c8" stroke-width="1.600"/><path d="M6 10 L5.300 10.800 M9 10 L9.700 10.800" stroke="#2f55c8" stroke-width="1.500"/></symbol>
<symbol id="copy" viewBox="0 0 16 16"><path d="M0.500 1.500 H6 L8.500 4 V10.500 H0.500 Z" fill="#fff" stroke="#5874b0"/><path d="M2 4.500 H6 M2 6.500 H7 M2 8.500 H7" stroke="#3b62c4" stroke-width=".9"/><path d="M6.500 5.500 H12 L14.500 8 V15.500 H6.500 Z" fill="#fff" stroke="#5874b0"/><path d="M8 9 H12 M8 11 H13 M8 13 H13" stroke="#3b62c4" stroke-width=".9"/></symbol>
<symbol id="paste" viewBox="0 0 16 16"><rect x="0.500" y="2.500" width="12" height="12.500" rx="1" fill="#e9b43a" stroke="#9a6c12"/><rect x="3.500" y="1" width="6" height="3.500" rx="1" fill="#d8d8de" stroke="#777"/><path d="M7.500 7.500 H13 L15.500 10 V15.500 H7.500 Z" fill="#fff" stroke="#5874b0"/><path d="M9 11 H13.500 M9 13 H13.500" stroke="#7a8fbf" stroke-width=".9"/></symbol>
<symbol id="undo" viewBox="0 0 16 16"><path d="M3 5.500 C6 1.500 12 2.500 12 7.500 C12 11 9.500 13 7 13.500" fill="none" stroke="#2f62d0" stroke-width="2.400"/><path d="M0.500 3 L7 3.500 L2.500 9 Z" fill="#2f62d0"/></symbol>
<symbol id="redo" viewBox="0 0 16 16"><path d="M12 5.500 C9 1.500 3 2.500 3 7.500 C3 11 5.500 13 8 13.500" fill="none" stroke="#aab2c4" stroke-width="2.200"/><path d="M14.500 3 L8 3.500 L12.500 9 Z" fill="#aab2c4"/></symbol>
<symbol id="navback" viewBox="0 0 16 16"><rect x="4.500" y="0.500" width="11" height="10" fill="#fff" stroke="#5a6a8a"/><path d="M6.500 3 H9 M10.500 3 H13.500 M6.500 5.500 H9 M10.500 5.500 H13.500 M6.500 8 H13.500" stroke="#2f55c8" stroke-width="1.200"/><path d="M0 11.500 L5 7.500 V10 H10 V13 H5 V15.500 Z" fill="#3b78e0" stroke="#2450a8" stroke-width=".7"/></symbol>
<symbol id="navfwd" viewBox="0 0 16 16"><rect x="0.500" y="0.500" width="11" height="10" fill="#e4e7ee" stroke="#a4abba"/><path d="M2.500 3 H5 M6.500 3 H9.500 M2.500 5.500 H5 M6.500 5.500 H9.500 M2.500 8 H9.500" stroke="#a4abba" stroke-width="1.200"/><path d="M16 11.500 L11 7.500 V10 H6 V13 H11 V15.500 Z" fill="#b4bac8" stroke="#9aa2b2" stroke-width=".7"/></symbol>
<symbol id="actmon" viewBox="0 0 16 16"><rect x="0.500" y="1.500" width="13" height="10" fill="#eef3fb" stroke="#5a6a8a"/><path d="M1 4 H13 M1 6.500 H13 M1 9 H13 M4 2 V11 M7 2 V11 M10 2 V11" stroke="#b9c6dd" stroke-width=".6"/><path d="M1 9 L4 5 L7 8 L10 3.500 L13 6" fill="none" stroke="#2a9a30" stroke-width="1.200"/><path d="M1 4.500 L4 8 L7 4.500 L10 8.500 L13 4" fill="none" stroke="#2f62d0" stroke-width="1.100"/><path d="M0 13.500 H12" stroke="#333" stroke-width="1.200"/><path d="M13.500 9 V13 M11.500 12 L13.500 15.500 L15.500 12 Z" fill="#2a9a30" stroke="#2a9a30" stroke-width="1.200"/></symbol>
<symbol id="play" viewBox="0 0 16 16"><path d="M4.500 2.500 L12 8 L4.500 13.500 Z" fill="#35aa28" stroke="#1f8a18" stroke-width=".8"/></symbol>
<symbol id="find" viewBox="0 0 16 16"><path d="M0.500 13.500 V3.500 H5 L6 5 H10 V7" fill="#f6de80" stroke="#b8891a"/><path d="M0.500 13.500 L3.500 7 H14.500 L12 13.500 Z" fill="url(#gopen)" stroke="#b8891a" stroke-linejoin="round"/><path d="M8 8 L9 2.500 H10.500 L11 4 L11.500 2.500 H13 L15 8 Z" fill="#2c2c30"/><circle cx="9.200" cy="6.800" r="1.600" fill="#2c2c30"/><circle cx="13.600" cy="6.800" r="1.600" fill="#2c2c30"/><circle cx="9.200" cy="6.500" r=".7" fill="#fff"/><circle cx="13.600" cy="6.500" r=".7" fill="#fff"/><rect x="9.300" y="3" width=".9" height="1.200" fill="#fff"/><rect x="12" y="3" width=".9" height="1.200" fill="#fff"/></symbol>
<symbol id="regsrv" viewBox="0 0 16 16"><rect x="4.500" y="0.500" width="11" height="11" fill="#f4f6fb" stroke="#5a78c0"/><rect x="5" y="1" width="10" height="2.500" fill="#3b72dc"/><path d="M0.500 4.500 H3.500 L4.500 5.500 H8.500 V10.500 H0.500 Z" fill="#f3c93a" stroke="#b8891a"/><circle cx="9" cy="9" r="3" fill="#d8ecfa" stroke="#7a8aa8" stroke-width="1.200"/><path d="M11.200 11.200 L14.500 15" stroke="#d9a520" stroke-width="2"/></symbol>
<symbol id="props" viewBox="0 0 16 16"><rect x="0.500" y="4.500" width="11" height="11" fill="#fff" stroke="#5a6a8a"/><path d="M2 9 H4 M5.500 9 H10 M2 11.500 H4 M5.500 11.500 H10 M2 13.500 H4 M5.500 13.500 H10" stroke="#8a9cc0" stroke-width="1"/><path d="M3 6 L7 1 L10 2.500 L15.500 1 V6 L10.500 8 L7 6.500 Z" fill="#f3c93a" stroke="#a87c10" stroke-width=".8"/><rect x="14" y="1" width="2" height="5.500" fill="#2a9a30"/></symbol>
<symbol id="tools" viewBox="0 0 16 16"><path d="M2 2 L13 14" stroke="#8a94a8" stroke-width="2.200"/><path d="M0.500 1 A2.500 2.500 0 1 0 4.500 1" fill="none" stroke="#a4aec0" stroke-width="1.400"/><path d="M14 2 L8 8" stroke="#c8ced8" stroke-width="1.800"/><path d="M11.500 0.500 L15.500 4.500" stroke="#a4aec0" stroke-width="1.500"/><path d="M8 8 L2 14.500" stroke="#d8282c" stroke-width="2.600" stroke-linecap="round"/></symbol>
<symbol id="web" viewBox="0 0 16 16"><rect x="0.500" y="0.500" width="15" height="14" fill="#f4f6fb" stroke="#4a68b0"/><rect x="1" y="1" width="14" height="2.500" fill="#3b72dc"/><circle cx="8" cy="9" r="3.700" fill="#2a8ad0"/><path d="M5.500 7 Q7.500 5.500 9.500 7 Q10.500 9 8.500 10 Q7 12 6 10.500 Z" fill="#3aa83a"/></symbol>
<symbol id="srvcyl" viewBox="0 0 5 8"><rect x="0.500" y="0.500" width="4" height="7" rx="1.800" fill="#fbfcff" stroke="#4a5670" stroke-width="1"/></symbol>
<symbol id="connect" viewBox="0 0 16 16"><rect x="1.500" y="3.500" width="7" height="6" fill="#c8ccd6" stroke="#aab0bd"/><path d="M1 11 H9 M5 11 V14.500 H12.500 V9" stroke="#aab0bd" fill="none" stroke-width="1.200"/><rect x="10.500" y="2.500" width="4" height="6.500" rx="1.500" fill="#d9dce4" stroke="#aab0bd"/><path d="M10.500 11.500 L12.500 9.500 L14.500 11.500" fill="none" stroke="#aab0bd" stroke-width="1.200"/></symbol>
<symbol id="disconn" viewBox="0 0 16 16"><path d="M2.500 8 V14.500 H12 M7.500 13 V14.500" stroke="#2a9a30" stroke-width="1.300" fill="none"/><use href="#srvcyl" x="0" y="1" width="5" height="8"/><use href="#srvcyl" x="11" y="1" width="5" height="8"/><use href="#srvcyl" x="5.500" y="5.500" width="5" height="8"/><path d="M11 10.500 L16 16 M16 10.500 L11 16" stroke="#e02a20" stroke-width="1.700"/></symbol>
<symbol id="excl" viewBox="0 0 16 16"><path d="M5.500 1.500 Q8 0.300 10 1.500 L8.500 10 H7 Z" fill="#ec6a28" stroke="#b8461a" stroke-width=".6"/><circle cx="7.800" cy="12.800" r="1.700" fill="#ec6a28" stroke="#b8461a" stroke-width=".6"/></symbol>
<symbol id="playg" viewBox="0 0 16 16"><path d="M4.500 2.500 L11.500 7.500 L4.500 12.500 Z" fill="#4ab838" stroke="#1f8a18" stroke-width="1"/></symbol>
<symbol id="check" viewBox="0 0 16 16"><path d="M1 8.500 L5 12.500 L13.500 3.500" fill="none" stroke="#2f62d0" stroke-width="2.200"/></symbol>
<symbol id="plan3" viewBox="0 0 16 16"><rect x="0.500" y="0.500" width="4" height="5" fill="#8fc0f8" stroke="#2f62d0"/><rect x="11.500" y="0.500" width="4" height="4" fill="#8fc0f8" stroke="#2f62d0"/><path d="M6 2.500 H11 M6 2.500 L8 1 M6 2.500 L8 4" stroke="#2f62d0" stroke-width="1" fill="none"/><rect x="0.500" y="10.500" width="4.500" height="5" fill="#5ed04a" stroke="#1f8a18"/><path d="M2.700 10 V7 M1.300 8.300 L2.700 6.800 L4.100 8.300" stroke="#1f8a18" stroke-width="1" fill="none"/></symbol>
<symbol id="estplan" viewBox="0 0 16 16"><use href="#plan3" width="16" height="16"/><path d="M7.500 7.500 H15.500 V12 L12.500 14.500 H9 L7.500 16 Z" fill="#fff" stroke="#333" stroke-width="1"/></symbol>
<symbol id="actplan" viewBox="0 0 16 16"><use href="#plan3" width="16" height="16"/></symbol>
<symbol id="qopts" viewBox="0 0 16 16"><rect x="6.500" y="1.500" width="9" height="7" fill="#e9eefa" stroke="#9ab0dc"/><rect x="0.500" y="7.500" width="9" height="7" fill="#e9eefa" stroke="#9ab0dc"/><rect x="3.500" y="4.500" width="9" height="7" fill="#f4f7fd" stroke="#4a68b0"/><rect x="5" y="7" width="6" height="2" fill="#4a68b0"/></symbol>
<symbol id="intelli" viewBox="0 0 16 16"><rect x="3" y="1" width="10.500" height="14" fill="#fff" stroke="#3a4258"/><path d="M4.500 3.500 H12 M4.500 6 H12" stroke="#c8ccd8" stroke-width="1"/><rect x="4.500" y="8.500" width="7.500" height="4.500" fill="#eef0f6" stroke="#4a5678" stroke-width=".8"/><path d="M6 10.800 H10.500" stroke="#4a5678" stroke-width="1.200"/></symbol>
<symbol id="cstats" viewBox="0 0 16 16"><rect x="0.500" y="2.500" width="2" height="6" fill="#3ab030" stroke="#1f7a18" stroke-width=".6"/><rect x="3.500" y="0.500" width="2" height="8" fill="#3ab030" stroke="#1f7a18" stroke-width=".6"/><rect x="6.500" y="1.500" width="2.500" height="4" fill="#555"/><rect x="5.500" y="5.500" width="10" height="7" fill="#3b8af0" stroke="#2450a8"/><rect x="7" y="7" width="7" height="4" fill="#7ab8ff"/><path d="M6 14.500 H15.500" stroke="#5a6a8a" stroke-width="1.600"/></symbol>
<symbol id="bluearc" viewBox="0 0 8 10"><path d="M4.500 0.800 A3.500 3.500 0 1 0 5.500 8" fill="none" stroke="#2f62d0" stroke-width="1.800"/><path d="M3 9.800 L7.800 8.200 L4.800 5.200 Z" fill="#2f62d0"/></symbol>
<symbol id="rtext" viewBox="0 0 16 16"><path d="M7.500 3.500 H13 L15.500 6 V15.500 H7.500 Z" fill="#fff" stroke="#2a3248"/><path d="M10 7.500 H12 M10 9.500 H14 M10 11.500 H14 M10 13.500 H14" stroke="#6a7690" stroke-width="1"/><path d="M1.500 0.300 V3.500 M6.500 0.300 V3.500 M4.800 4.800 V7.200" stroke="#111" stroke-width="1"/><circle cx="3.900" cy="1.900" r="1.150" fill="none" stroke="#111" stroke-width=".9"/><circle cx="8.900" cy="1.900" r="1.150" fill="none" stroke="#111" stroke-width=".9"/><circle cx="2.300" cy="5.800" r="1.100" fill="none" stroke="#111" stroke-width=".9"/><path d="M2.200 7.500 C0 9.500 0.500 12.500 3.500 13.500" fill="none" stroke="#2f62d0" stroke-width="1.500"/><path d="M3 10 L9 12.500 L4 16 L5 13.800 L2.500 12.800 Z" fill="#2f62d0" stroke="#2450b0" stroke-width=".5"/></symbol>
<symbol id="rgrid" viewBox="0 0 16 16"><rect x="6.500" y="3.500" width="9" height="12" fill="#fff" stroke="#6a7898"/><path d="M6.500 6.500 H15.500 M6.500 9.500 H15.500 M6.500 12.500 H15.500 M9.500 3.500 V15.500 M12.500 3.500 V15.500" stroke="#6a7898" stroke-width=".9"/><path d="M1.500 0.300 V3.500 M6.500 0.300 V3.500 M4.800 4.800 V7.200" stroke="#111" stroke-width="1"/><circle cx="3.900" cy="1.900" r="1.150" fill="none" stroke="#111" stroke-width=".9"/><circle cx="8.900" cy="1.900" r="1.150" fill="none" stroke="#111" stroke-width=".9"/><circle cx="2.300" cy="5.800" r="1.100" fill="none" stroke="#111" stroke-width=".9"/><path d="M2.200 7.500 C0 9.500 0.500 12.500 3.500 13.500" fill="none" stroke="#2f62d0" stroke-width="1.500"/><path d="M3 10 L9 12.500 L4 16 L5 13.800 L2.500 12.800 Z" fill="#2f62d0" stroke="#2450b0" stroke-width=".5"/></symbol>
<symbol id="rfile" viewBox="0 0 16 16"><path d="M7.500 3.500 H13 L15.500 6 V15.500 H7.500 Z" fill="url(#gdoc)" stroke="#2a3248"/><path d="M13 3.500 V6 H15.500" fill="none" stroke="#2a3248" stroke-width=".8"/><path d="M1.500 0.300 V3.500 M6.500 0.300 V3.500 M4.800 4.800 V7.200" stroke="#111" stroke-width="1"/><circle cx="3.900" cy="1.900" r="1.150" fill="none" stroke="#111" stroke-width=".9"/><circle cx="8.900" cy="1.900" r="1.150" fill="none" stroke="#111" stroke-width=".9"/><circle cx="2.300" cy="5.800" r="1.100" fill="none" stroke="#111" stroke-width=".9"/><path d="M2.200 7.500 C0 9.500 0.500 12.500 3.500 13.500" fill="none" stroke="#2f62d0" stroke-width="1.500"/><path d="M3 10 L9 12.500 L4 16 L5 13.800 L2.500 12.800 Z" fill="#2f62d0" stroke="#2450b0" stroke-width=".5"/></symbol>
<symbol id="comment" viewBox="0 0 16 16"><path d="M2 2.500 H15" stroke="#111" stroke-width="1.300"/><rect x="4.500" y="4.500" width="10.500" height="4" fill="#3ee0e0"/><path d="M5 11 H15 M2 14.500 H15" stroke="#111" stroke-width="1.300"/></symbol>
<symbol id="uncomment" viewBox="0 0 16 16"><rect x="4" y="6.500" width="10" height="2.500" fill="#3ee0e0"/><path d="M5 4.500 C6 0.500 12 0.500 12 4 C12 6 10.500 7 9 7.200" fill="none" stroke="#2f62d0" stroke-width="1.700"/><path d="M2 2.500 L7.500 3.500 L3.500 7.500 Z" fill="#2f62d0"/><path d="M6 11.500 H14 M2 15 H14" stroke="#111" stroke-width="1.300"/></symbol>
<symbol id="outdent" viewBox="0 0 16 16"><path d="M5 3.500 H16 M8.500 6.500 H16 M8.500 9.500 H14 M5 12.500 H16 M5 15 H14" stroke="#111" stroke-width="1.900"/><path d="M7.500 1 V16" stroke="#111" stroke-width="1" stroke-dasharray="1.500 1"/><path d="M0 8 L3.500 5 V7 H7 V9 H3.500 V11 Z" fill="#3b78e0"/></symbol>
<symbol id="indent" viewBox="0 0 16 16"><path d="M5 3.500 H16 M8.500 6.500 H16 M8.500 9.500 H14 M5 12.500 H16 M5 15 H14" stroke="#111" stroke-width="1.900"/><path d="M7.500 1 V16" stroke="#111" stroke-width="1" stroke-dasharray="1.500 1"/><path d="M7 8 L3.500 5 V7 H0 V9 H3.500 V11 Z" fill="#3b78e0"/></symbol>
<symbol id="tmpl" viewBox="0 0 16 16"><path d="M1 8 L4 1 L7 8 M2 6 H6" fill="none" stroke="#111" stroke-width="1.400"/><path d="M11 9 V15.500 H13.500 Q15.300 15.500 15.300 13.800 Q15.300 12.300 13.500 12.200 Q15 12 15 10.500 Q15 9 13.500 9 Z M11 12.200 H13.500" fill="none" stroke="#6a7284" stroke-width="1.200"/><path d="M8 4 Q10 3 12 0.500 M10.500 0.500 H12.300 V2.300" fill="none" stroke="#555" stroke-width=".9" stroke-dasharray="1.200 1"/><path d="M3 9.500 Q4 13 8 13.500 M7 12 L8.700 13.500 L7 15" fill="none" stroke="#555" stroke-width=".9" stroke-dasharray="1.200 1"/></symbol>
</defs>
</svg>

<div id="dots" class="a"></div>
<div id="title" class="a"><div class="t">SQLQuery12.sql - Mariam-PC.dbTest (MARIAM-PC\mariam (69))* - Microsoft SQL Server Management Studio</div>
<svg style="left:2px;top:2px" width="17" height="17"><use href="#appicon"/></svg>
<div id="capbtns" style="left:1264px;top:0;width:100px;height:19px">
 <div style="left:0;top:0;width:28px;height:19px;border:1px solid #5d8a92;border-top:0;border-radius:0 0 0 4px;background:linear-gradient(#b9cfd0,#9dbcbf 45%,#8db0b4 50%,#a3c0c2)"><div style="left:8px;top:9px;width:11px;height:4px;background:#fff;border:1px solid #57707a;border-radius:1px"></div></div>
 <div style="left:27px;top:0;width:27px;height:19px;border:1px solid #5d8a92;border-top:0;background:linear-gradient(#b9cfd0,#9dbcbf 45%,#8db0b4 50%,#a3c0c2)"><div style="left:10px;top:3px;width:9px;height:8px;border:1.500px solid #fff;outline:1px solid #57707a;border-radius:1px"></div><div style="left:7px;top:6px;width:9px;height:8px;border:1.500px solid #fff;outline:1px solid #57707a;background:#9dbcbf;border-radius:1px"></div></div>
 <div style="left:53px;top:0;width:47px;height:19px;border:1px solid #8a4a40;border-top:0;border-radius:0 0 4px 0;background:linear-gradient(#e9a08f,#d9604a 45%,#c8442c 50%,#d97a5a)"><svg style="left:16px;top:3px" width="14" height="12" viewBox="0 0 14 12"><path d="M1.500 1.500 L5.500 6 L1.500 10.500 H4.500 L7 7.700 L9.500 10.500 H12.500 L8.500 6 L12.500 1.500 H9.500 L7 4.300 L4.500 1.500 Z" fill="#fff" stroke="#6a3a36" stroke-width=".8"/></svg></div>
</div>
</div>
<div id="menu" class="a">
<span style="left:7px">File</span><span style="left:39px">Edit</span><span style="left:73px">View</span><span style="left:112px">Query</span><span style="left:158px">Project</span><span style="left:209px">Debug</span><span style="left:258px">Tools</span><span style="left:301px">Window</span><span style="left:359px">Help</span>
</div>
<div id="tray" class="a">
<div class="tb" id="tb1" style="left:4px;top:0;width:1189px">
 <div class="grip"></div>
 <div class="ddarrow" style="left:34px;top:10px"></div>
 <div class="ddarrow" style="left:66px;top:10px;border-top-color:#8e98ac"></div>
 <div class="sep" style="left:144px"></div>
 <div class="tbtxt" style="left:171px;letter-spacing:-0.11px">New Query</div>
 <div class="sep" style="left:330px"></div>
 <div class="sep" style="left:402px"></div>
 <div class="ddarrow" style="left:432px;top:10px"></div>
 <div class="ddarrow" style="left:467px;top:10px;border-top-color:#8e98ac"></div>
 <div class="ddarrow" style="left:501px;top:10px"></div>
 <div class="sep" style="left:534px"></div>
 <div class="sep" style="left:563px"></div>
 <div class="combo dis" style="left:592px;width:90px"><div class="ddarrow" style="left:79px;top:7px;border-top-color:#98a2b6"></div></div>
 <div class="combo dis" style="left:689px;width:159px"><div class="ddarrow" style="left:148px;top:7px;border-top-color:#98a2b6"></div></div>
 <div class="sep" style="left:854px"></div>
 <div class="combo" style="left:883px;width:185px"><div class="tbtxt" style="left:3px;top:1px">eq</div><div class="ddarrow" style="left:174px;top:7px"></div></div>
 <div class="sep" style="left:1074px"></div>
 <div class="ddarrow" style="left:1167px;top:9px"></div>
 <div style="left:1176px;top:0;width:13px;height:24px;background:#dde2ee;border-radius:0 3px 3px 0"><div style="left:4px;top:14px;width:7px;height:1.500px;background:#1e1e1e"></div><div class="ddarrow" style="left:4px;top:17px"></div></div>
</div>
<div class="tb" id="tb2" style="left:4px;top:25px;width:747px">
 <div class="grip"></div>
 <div class="sep" style="left:56px"></div>
 <div class="combo" style="left:63px;top:1px;width:160px"><div class="tbtxt" style="left:3px;top:1px">dbTest</div><div class="ddarrow" style="left:150px;top:7px"></div></div>
 <div class="sep" style="left:229px"></div>
 <div class="tbtxt" style="left:256px;letter-spacing:-0.55px">Execute</div>
 <div class="tbtxt" style="left:327px;letter-spacing:-0.17px">Debug</div>
 <div style="left:377px;top:6px;width:8px;height:8px;background:#9aa0ad;border:1px solid #b8bdc8"></div>
 <div class="hot" style="left:459px;top:1px;width:21px;height:22px"></div>
 <div class="sep" style="left:483px"></div>
 <div class="sep" style="left:534px"></div>
 <div class="hot" style="left:560px;top:1px;width:21px;height:22px"></div>
 <div class="sep" style="left:607px"></div>
 <div class="sep" style="left:658px"></div>
 <div class="sep" style="left:709px"></div>
 <div style="left:735px;top:0;width:12px;height:24px;background:#dde2ee;border-radius:0 3px 3px 0"><div style="left:3px;top:14px;width:7px;height:1.500px;background:#1e1e1e"></div><div class="ddarrow" style="left:3px;top:17px"></div></div>
</div>
<svg style="left:16px;top:4px" width="16" height="16"><use href="#newproj"/></svg><svg style="left:50px;top:4px" width="16" height="16"><use href="#additem"/></svg><svg style="left:82px;top:4px" width="16" height="16"><use href="#open"/></svg><svg style="left:104px;top:4px" width="16" height="16"><use href="#save"/></svg><svg style="left:126px;top:4px" width="16" height="16"><use href="#saveall"/></svg><svg style="left:154px;top:4px" width="16" height="16"><use href="#newquery"/></svg>
<svg style="left:245px;top:4px" width="16" height="16"><use href="#docdb"/></svg><svg style="left:267px;top:4px" width="16" height="16"><use href="#mdx"/></svg><svg style="left:290px;top:4px" width="16" height="16"><use href="#dmx"/></svg><svg style="left:312px;top:4px" width="16" height="16"><use href="#xmla"/></svg>
<svg style="left:340px;top:4px" width="16" height="16"><use href="#cut"/></svg><svg style="left:362px;top:4px" width="16" height="16"><use href="#copy"/></svg><svg style="left:384px;top:4px" width="16" height="16"><use href="#paste"/></svg>
<svg style="left:413px;top:4px" width="16" height="16"><use href="#undo"/></svg><svg style="left:448px;top:4px" width="16" height="16"><use href="#redo"/></svg><svg style="left:483px;top:4px" width="16" height="16"><use href="#navback"/></svg><svg style="left:516px;top:4px" width="16" height="16"><use href="#navfwd"/></svg>
<svg style="left:544px;top:4px" width="16" height="16"><use href="#actmon"/></svg><svg style="left:574px;top:4px" width="16" height="16"><use href="#play"/></svg><svg style="left:865px;top:4px" width="16" height="16"><use href="#find"/></svg>
<svg style="left:1085px;top:4px" width="16" height="16"><use href="#regsrv"/></svg><svg style="left:1107px;top:4px" width="16" height="16"><use href="#props"/></svg><svg style="left:1129px;top:4px" width="16" height="16"><use href="#tools"/></svg><svg style="left:1151px;top:4px" width="16" height="16"><use href="#web"/></svg>
<svg style="left:17px;top:29px" width="16" height="16"><use href="#connect"/></svg><svg style="left:38px;top:29px" width="16" height="16"><use href="#disconn"/></svg><svg style="left:240px;top:29px" width="16" height="16"><use href="#excl"/></svg><svg style="left:311px;top:29px" width="16" height="16"><use href="#playg"/></svg><svg style="left:400px;top:29px" width="16" height="16"><use href="#check"/></svg>
<svg style="left:421px;top:29px" width="16" height="16"><use href="#estplan"/></svg><svg style="left:444px;top:29px" width="16" height="16"><use href="#qopts"/></svg><svg style="left:466px;top:29px" width="16" height="16"><use href="#intelli"/></svg><svg style="left:494px;top:29px" width="16" height="16"><use href="#actplan"/></svg><svg style="left:516px;top:29px" width="16" height="16"><use href="#cstats"/></svg>
<svg style="left:544px;top:29px" width="16" height="16"><use href="#rtext"/></svg><svg style="left:567px;top:29px" width="16" height="16"><use href="#rgrid"/></svg><svg style="left:589px;top:29px" width="16" height="16"><use href="#rfile"/></svg><svg style="left:617px;top:29px" width="16" height="16"><use href="#comment"/></svg><svg style="left:640px;top:29px" width="16" height="16"><use href="#uncomment"/></svg>
<svg style="left:668px;top:29px" width="16" height="16"><use href="#outdent"/></svg><svg style="left:691px;top:29px" width="16" height="16"><use href="#indent"/></svg><svg style="left:720px;top:29px" width="16" height="16"><use href="#tmpl"/></svg>
</div>

<div id="oe" class="a">
<div id="oehead"><div class="s" style="left:2px;top:2px;color:#fff;font-size:12px;letter-spacing:-0.18px">Object Explorer</div>
<svg style="left:377px;top:7px" width="8" height="4" viewBox="0 0 8 4"><path d="M0 0 H8 L4 4 Z" fill="#dfe6f2"/></svg>
<svg style="left:392px;top:3px" width="9" height="13" viewBox="0 0 9 13"><path d="M2.500 1 H6.500 V6.500 M2.500 1 V6.500 M5.500 1 V6.500 M0.500 7 H8.500 M4.500 7 V12" fill="none" stroke="#fff" stroke-width="1.200"/></svg>
<svg style="left:407px;top:5px" width="10" height="9" viewBox="0 0 10 9"><path d="M0.700 0.500 L9.300 8.500 M9.300 0.500 L0.700 8.500" stroke="#fff" stroke-width="1.400"/></svg>
</div>
<div id="oetb"><div class="s" style="left:7px;top:5px;font-size:12px;color:#1e1e2a">Connect</div><div class="ddarrow" style="left:55px;top:12px;border-width:3px;border-top-width:3.5px"></div>
<svg style="left:69px;top:6px" width="16" height="16"><use href="#oeconn"/></svg><svg style="left:92px;top:6px" width="16" height="16"><use href="#oedisc"/></svg><svg style="left:113px;top:6px" width="16" height="16"><use href="#oestop"/></svg><svg style="left:135px;top:6px" width="16" height="16"><use href="#oefilter"/></svg><svg style="left:157px;top:6px" width="16" height="16"><use href="#oerefresh"/></svg><svg style="left:179px;top:6px" width="16" height="16"><use href="#oescript"/></svg>
</div>
<div class="row" style="top:47px"><div class="pm" style="left:47px"></div><svg style="left:62px;top:1px" width="16" height="16"><use href="#db"/></svg><div style="left:81px;top:0;width:40px;height:18px;background:#efeff2"></div><span style="left:83px;letter-spacing:0.06px">dbTest</span></div>
<div class="row" style="top:65px"><div class="pm p" style="left:66px"></div><svg style="left:81px;top:0px" width="16" height="16"><use href="#folder"/></svg><span style="left:102px;letter-spacing:-0.3px">Database Diagrams</span></div>
<div class="row" style="top:83px"><div class="pm" style="left:66px"></div><svg style="left:81px;top:0px" width="16" height="16"><use href="#folder"/></svg><span style="left:102px;letter-spacing:-0.15px">Tables</span></div>
<div class="row" style="top:101px"><div class="pm p" style="left:85px"></div><svg style="left:100px;top:0px" width="16" height="16"><use href="#folder"/></svg><span style="left:121px;letter-spacing:-0.24px">System Tables</span></div>
<div class="row" style="top:119px"><div class="pm p" style="left:85px"></div><svg style="left:100px;top:0px" width="16" height="16"><use href="#folder"/></svg><span style="left:121px;letter-spacing:-0.24px">FileTables</span></div>
<div class="row" style="top:137px"><div class="pm p" style="left:85px"></div><svg style="left:100px;top:0px" width="16" height="16"><use href="#table"/></svg><span style="left:121px;letter-spacing:-0.06px">dbo.Element</span></div>
<div class="row" style="top:155px"><div class="pm p" style="left:85px"></div><svg style="left:100px;top:0px" width="16" height="16"><use href="#table"/></svg><span style="left:121px;letter-spacing:-0.07px">dbo.Employee</span></div>
<div class="row" style="top:173px"><div class="pm p" style="left:85px"></div><svg style="left:100px;top:0px" width="16" height="16"><use href="#table"/></svg><span style="left:121px;letter-spacing:-0.07px">dbo.EmployeeProject</span></div>
<div class="row" style="top:191px"><div class="pm p" style="left:85px"></div><svg style="left:100px;top:0px" width="16" height="16"><use href="#table"/></svg><span style="left:121px;letter-spacing:-0.04px">dbo.Equation</span></div>
<div class="row" style="top:209px"><div class="pm p" style="left:85px"></div><svg style="left:100px;top:0px" width="16" height="16"><use href="#table"/></svg><span style="left:121px">dbo.Project</span></div>
<div class="row" style="top:227px"><div class="pm p" style="left:85px"></div><svg style="left:100px;top:0px" width="16" height="16"><use href="#table"/></svg><span style="left:121px;letter-spacing:-0.32px">dbo.RELATION</span></div>
<div class="row" style="top:245px"><div class="pm p" style="left:85px"></div><svg style="left:100px;top:0px" width="16" height="16"><use href="#table"/></svg><span style="left:121px;letter-spacing:-0.32px">dbo.SalaryParts</span></div>
<div class="row" style="top:263px"><div class="pm p" style="left:85px"></div><svg style="left:100px;top:0px" width="16" height="16"><use href="#table"/></svg><span style="left:121px;letter-spacing:-0.3px">dbo.SalaryPartsValues</span></div>
<div class="row" style="top:281px"><div class="pm p" style="left:85px"></div><svg style="left:100px;top:0px" width="16" height="16"><use href="#table"/></svg><span style="left:121px;letter-spacing:-0.17px">dbo.Table_1</span></div>
<div class="row" style="top:299px"><div class="pm p" style="left:66px"></div><svg style="left:81px;top:0px" width="16" height="16"><use href="#folder"/></svg><span style="left:102px;letter-spacing:-0.4px">Views</span></div>
<div class="row" style="top:317px"><div class="pm p" style="left:66px"></div><svg style="left:81px;top:0px" width="16" height="16"><use href="#folder"/></svg><span style="left:102px;letter-spacing:-0.15px">Synonyms</span></div>
<div class="row" style="top:335px"><div class="pm p" style="left:66px"></div><svg style="left:81px;top:0px" width="16" height="16"><use href="#folder"/></svg><span style="left:102px;letter-spacing:0.15px">Programmability</span></div>
<div class="row" style="top:353px"><div class="pm p" style="left:66px"></div><svg style="left:81px;top:0px" width="16" height="16"><use href="#folder"/></svg><span style="left:102px;letter-spacing:-0.34px">Service Broker</span></div>
<div class="row" style="top:371px"><div class="pm p" style="left:66px"></div><svg style="left:81px;top:0px" width="16" height="16"><use href="#folder"/></svg><span style="left:102px;letter-spacing:-0.33px">Storage</span></div>
<div class="row" style="top:389px"><div class="pm p" style="left:66px"></div><svg style="left:81px;top:0px" width="16" height="16"><use href="#folder"/></svg><span style="left:102px;letter-spacing:-0.16px">Security</span></div>
<div class="row" style="top:407px"><div class="pm" style="left:47px"></div><svg style="left:62px;top:1px" width="16" height="16"><use href="#db"/></svg><span style="left:83px;letter-spacing:-0.22px">dbTestDates</span></div>
<div class="row" style="top:425px"><div class="pm p" style="left:66px"></div><svg style="left:81px;top:0px" width="16" height="16"><use href="#folder"/></svg><span style="left:102px;letter-spacing:-0.3px">Database Diagrams</span></div>
<div class="row" style="top:443px"><div class="pm p" style="left:66px"></div><svg style="left:81px;top:0px" width="16" height="16"><use href="#folder"/></svg><span style="left:102px;letter-spacing:-0.15px">Tables</span></div>
<div class="row" style="top:461px"><div class="pm p" style="left:66px"></div><svg style="left:81px;top:0px" width="16" height="16"><use href="#folder"/></svg><span style="left:102px;letter-spacing:-0.4px">Views</span></div>
<div class="row" style="top:479px"><div class="pm p" style="left:66px"></div><svg style="left:81px;top:0px" width="16" height="16"><use href="#folder"/></svg><span style="left:102px;letter-spacing:-0.15px">Synonyms</span></div>
<div class="row" style="top:497px"><div class="pm p" style="left:66px"></div><svg style="left:81px;top:0px" width="16" height="16"><use href="#folder"/></svg><span style="left:102px;letter-spacing:0.15px">Programmability</span></div>
<div class="row" style="top:515px"><div class="pm p" style="left:66px"></div><svg style="left:81px;top:0px" width="16" height="16"><use href="#folder"/></svg><span style="left:102px;letter-spacing:-0.34px">Service Broker</span></div>
<div class="row" style="top:533px"><div class="pm p" style="left:66px"></div><svg style="left:81px;top:0px" width="16" height="16"><use href="#folder"/></svg><span style="left:102px;letter-spacing:-0.33px">Storage</span></div>
<div class="row" style="top:551px"><div class="pm p" style="left:66px"></div><svg style="left:81px;top:0px" width="16" height="16"><use href="#folder"/></svg><span style="left:102px;letter-spacing:-0.16px">Security</span></div>
<div class="row" style="top:569px"><svg style="left:62px;top:1px" width="16" height="16"><use href="#db"/></svg><span style="left:83px">ddatathing</span></div>
<div style="left:403px;top:46px;width:18px;height:530px;background:#f0f0f0">
<svg style="left:3px;top:7px" width="9" height="6" viewBox="0 0 9 6"><path d="M0.700 5.300 L4.500 1.300 L8.300 5.300" fill="none" stroke="#404040" stroke-width="1.800"/></svg>
<div style="left:0;top:66px;width:18px;height:231px;background:#cdcdcd"></div>
<svg style="left:3px;top:516px" width="9" height="6" viewBox="0 0 9 6"><path d="M0.700 0.700 L4.500 4.700 L8.300 0.700" fill="none" stroke="#404040" stroke-width="1.800"/></svg>
</div>
</div>
<div id="ed" class="a" style="left:0;top:0;width:0;height:0">
<div class="s" style="left:438px;top:104px;color:#fff;font-size:12px;letter-spacing:.07px">scripto.sql - Mari...IAM-PC\mariam (71))*</div>
<div style="left:682px;top:101px;width:246px;height:21px;background:#fdebab;border-radius:2px 2px 0 0"></div>
<div class="s" style="left:686px;top:104px;color:#1b1b1b;font-size:12px;letter-spacing:-0.11px">SQLQuery12.sql -...AM-PC\mariam (69))*</div>
<svg style="left:912px;top:107px" width="10" height="9" viewBox="0 0 10 9"><path d="M0.700 0.500 L9.300 8.500 M9.300 0.500 L0.700 8.500" stroke="#6e6850" stroke-width="1.300"/></svg>
<div class="s" style="left:933px;top:104px;color:#fff;font-size:12px;letter-spacing:.05px">MARIAM-PC.dbTest - dbo.Equation</div>
<svg style="left:1325px;top:107px" width="9" height="8" viewBox="0 0 9 8"><path d="M0 0 H9 V2 H0 Z M0 3.500 H9 L4.500 8 Z" fill="#dfe6f2"/></svg>
<div style="left:433px;top:121px;width:906px;height:5px;background:linear-gradient(#fdebab,#fdefbd 60%,#fff6d8);border-radius:3px 3px 0 0"></div>
<div style="left:433px;top:125px;width:906px;height:354px;background:#fff"></div>
<div style="left:433px;top:125px;width:17px;height:354px;background:#ececed"></div>
<div style="left:453px;top:125px;width:5px;height:224px;background:#fbe865"></div>
<div style="left:460px;top:129px;width:9px;height:9px;border:1px solid #8c8c8c;background:#fff"><div style="left:1px;top:3px;width:5px;height:1px;background:#404040"></div></div>
<div style="left:465px;top:138px;width:1px;height:195px;background:#9a9a9a"></div>
<div style="left:465px;top:332px;width:4px;height:1px;background:#9a9a9a"></div>
<div id="code" class="mono" style="left:433px;top:126px;width:880px;height:354px">
<div style="top:0px"><span class="k">with</span> cte <span class="k">as</span> <span class="g">(</span></div>
<div style="top:16px">      <span class="k">select</span> e<span class="g">.</span>fk<span class="g">,</span> 1 <span class="k">as</span> lev</div>
<div style="top:32px">      <span class="k">from</span> equation e</div>
<div style="top:48px">      <span class="k">group</span> <span class="k">by</span> e<span class="g">.</span>fk</div>
<div style="top:64px">      <span class="k">having</span> <span class="f">sum</span><span class="g">(</span><span class="k">case</span> <span class="k">when</span> <span class="k">type</span> <span class="g">=</span> <span class="r">'Element'</span> <span class="k">then</span> 1 <span class="k">else</span> 0 <span class="k">end</span><span class="g">)</span> <span class="g">=</span> 0</div>
<div style="top:80px">      <span class="k">union</span> <span class="g">all</span></div>
<div style="top:96px">      <span class="k">select</span> e<span class="g">.</span>fk<span class="g">,</span> <span class="f">max</span><span class="g">(</span>cte<span class="g">.</span>lev<span class="g">)</span> <span class="g">+</span> 1</div>
<div style="top:112px">      <span class="k">from</span> equation e <span class="g">left</span> <span class="g">join</span></div>
<div style="top:128px">           cte</div>
<div style="top:144px">           <span class="k">on</span> e<span class="g">.</span>fk <span class="g">=</span> cte<span class="g">.</span>fk</div>
<div style="top:160px">      <span class="k">group</span> <span class="k">by</span> e<span class="g">.</span>fk</div>
<div style="top:176px">      <span class="k">having</span> <span class="f">count</span><span class="g">(*)</span> <span class="g">=</span> <span class="f">count</span><span class="g">(</span>cte<span class="g">.</span>fk<span class="g">)</span></div>
<div style="top:192px">     <span class="g">)</span></div>
</div>
<div style="left:506px;top:333px;width:1px;height:15px;background:#000"></div>
<svg style="left:472px;top:345px" width="8" height="4" viewBox="0 0 8 4"><path d="M0.300 2.200 Q2 -0.500 4 2 T7.700 1.600" fill="none" stroke="#e03030" stroke-width="1.100"/></svg>
<div style="left:1322px;top:125px;width:17px;height:354px;background:#f0f0f0">
<div style="left:0;top:0;width:17px;height:17px;background:#e4e4e4;border:1px solid #b9b9b9"></div>
<svg style="left:3px;top:2px" width="11" height="13" viewBox="0 0 11 13"><path d="M0 5.500 H11 M0 7.500 H11 M5.500 0.500 V5 M5.500 8 V12.500" stroke="#111" stroke-width="1"/><path d="M5.500 0 L8 3 H3 Z M5.500 13 L8 10 H3 Z" fill="#111"/></svg>
<svg style="left:4px;top:23px" width="9" height="6" viewBox="0 0 9 6"><path d="M0.700 5.300 L4.500 1.300 L8.300 5.300" fill="none" stroke="#a0a0a0" stroke-width="1.500"/></svg>
<div style="left:0;top:35px;width:17px;height:190px;background:#cdcdcd"></div>
<svg style="left:4px;top:343px" width="9" height="6" viewBox="0 0 9 6"><path d="M0.700 0.700 L4.500 4.700 L8.300 0.700" fill="none" stroke="#a0a0a0" stroke-width="1.500"/></svg>
</div>
<div style="left:433px;top:479px;width:906px;height:42px;background:#f0f0f0"></div>
<div style="left:434px;top:481px;width:58px;height:13px;background:#fff"><div class="s" style="left:3px;top:-2px;font-size:12px;color:#000">100 %</div><div class="ddarrow" style="left:50px;top:5px"></div></div>
<svg style="left:499px;top:483px" width="5" height="9" viewBox="0 0 5 9"><path d="M4.300 0.700 L0.900 4.500 L4.300 8.300" fill="none" stroke="#d0d0d0" stroke-width="1.500"/></svg>
<svg style="left:1311px;top:483px" width="5" height="9" viewBox="0 0 5 9"><path d="M0.700 0.700 L4.100 4.500 L0.700 8.300" fill="none" stroke="#d0d0d0" stroke-width="1.500"/></svg>
<div style="left:1322px;top:479px;width:17px;height:17px;background:#fdfdfd"></div>
<div style="left:433px;top:521px;width:906px;height:1px;background:#a5a5a5"></div>
<div style="left:433px;top:500px;width:85px;height:22px;background:#fff;border:1px solid #a5a5a5;border-left:0;border-bottom:0"></div>
<svg style="left:441px;top:502px" width="16" height="16"><use href="#msgicon"/></svg>
<div class="s" style="left:462px;top:503px;font-size:11px;letter-spacing:-0.4px;color:#111">Messages</div>
<div style="left:433px;top:522px;width:906px;height:108px;background:#fff"></div>
<div id="msg" class="mono" style="left:433px;top:523px;width:880px;height:100px"><div style="top:1px">Msg 102, Level 15, State 1, Line 13</div><div style="top:16.5px">Incorrect syntax near ')'.</div></div>
<div style="left:1318px;top:523px;width:18px;height:107px;background:#f0f0f0">
<svg style="left:4px;top:6px" width="9" height="6" viewBox="0 0 9 6"><path d="M0.700 5.300 L4.500 1.300 L8.300 5.300" fill="none" stroke="#9a9a9a" stroke-width="1.500"/></svg>
<div style="left:0;top:17px;width:17px;height:57px;background:#cdcdcd"></div>
<svg style="left:4px;top:96px" width="9" height="6" viewBox="0 0 9 6"><path d="M0.700 0.700 L4.500 4.700 L8.300 0.700" fill="none" stroke="#9a9a9a" stroke-width="1.500"/></svg>
</div>
<div style="left:433px;top:630px;width:906px;height:17px;background:#f0f0f0"></div>
<div style="left:437px;top:631px;width:59px;height:14px;background:#fff"><div class="s" style="left:3px;top:-1px;font-size:12px;color:#000">100 %</div><div class="ddarrow" style="left:51px;top:5px"></div></div>
<svg style="left:503px;top:634px" width="5" height="9" viewBox="0 0 5 9"><path d="M4.300 0.700 L0.900 4.500 L4.300 8.300" fill="none" stroke="#d0d0d0" stroke-width="1.500"/></svg>
<svg style="left:1308px;top:634px" width="5" height="9" viewBox="0 0 5 9"><path d="M0.700 0.700 L4.100 4.500 L0.700 8.300" fill="none" stroke="#d0d0d0" stroke-width="1.500"/></svg>
<div style="left:1319px;top:630px;width:20px;height:17px;background:#fff"></div>
<div style="left:433px;top:647px;width:906px;height:5px;background:#fff"></div>
<div style="left:433px;top:649px;width:906px;height:1px;background:#b4b4b4"></div>
<div class="st" style="left:433px;top:652px;width:906px;height:26px;background:linear-gradient(#ede494,#efe698 70%,#f8e9ac);border-radius:0 0 3px 3px">
<svg style="left:4px;top:3px" width="16" height="16" viewBox="0 0 16 16"><path d="M8 1 L15.300 14.500 H0.700 Z" fill="#fbe23a" stroke="#b89a10" stroke-width="1" stroke-linejoin="round"/><path d="M8 5 V10.200" stroke="#111" stroke-width="2"/><circle cx="8" cy="12.300" r="1.100" fill="#111"/></svg>
<span style="left:23px;letter-spacing:-.07px">Query completed with errors.</span>
<i style="left:459px"></i><span style="left:466px;letter-spacing:-.17px">Mariam-PC (12.0 RTM)</span>
<i style="left:594px"></i><span style="left:600px">MARIAM-PC\mariam (69)</span>
<i style="left:744px"></i><span style="left:750px">dbTest</span>
<i style="left:793px"></i><span style="left:799px;letter-spacing:-.64px">00:00:00</span>
<i style="left:848px"></i><span style="left:854px;letter-spacing:-.14px">0 rows</span>
</div>
<div style="left:1337px;top:125px;width:2px;height:527px;background:#e6e9f5"></div>
<div style="left:1346px;top:102px;width:20px;height:77px;background:#43587c;border-radius:3px 0 0 3px"></div>
<svg style="left:1349px;top:104px" width="16" height="16"><use href="#propicon"/></svg>
<div class="s" style="left:1348px;top:124px;width:16px;height:54px;color:#fff;font-size:12px;letter-spacing:-0.27px;writing-mode:vertical-rl;line-height:16px">Properties</div>
</div>
<div id="bot" class="a" style="left:0;top:0;width:0;height:0">
<div style="left:6px;top:685px;width:98px;height:20px;background:#465c82;border-radius:0 0 2px 2px"></div>
<svg style="left:9px;top:688px" width="15" height="15"><use href="#findres"/></svg>
<div class="s" style="left:30px;top:686px;color:#fff;font-size:11.5px;letter-spacing:-0.25px">Find Results 1</div>
<div style="left:0;top:706px;width:1366px;height:22px;background:#2a3a5a"></div>
<div class="s" style="left:4px;top:709px;color:#fff;font-size:12px">Ready</div>
<div class="s" style="left:1012px;top:709px;color:#fff;font-size:12px;letter-spacing:-0.35px">Ln 14</div>
<div class="s" style="left:1104px;top:709px;color:#fff;font-size:12px">Col 6</div>
<div class="s" style="left:1196px;top:709px;color:#fff;font-size:12px">Ch 6</div>
<div class="s" style="left:1332px;top:709px;color:#fff;font-size:12px">INS</div>
<div id="task">
 <div class="tbtn" style="left:113px;width:52px"></div><div class="tbtn" style="left:165px;width:4px;border-left:0"></div><div class="tbtn" style="left:169px;width:4px;border-left:0"></div>
 <div class="tbtn" style="left:300px;width:59px;background:rgba(255,255,255,.38);border-color:rgba(255,255,255,.7)"></div>
 <div class="tbtn" style="left:362px;width:59px"></div>
 <div class="tbtn" style="left:424px;width:59px"></div>
 <div class="tbtn" style="left:548px;width:58px"></div>
 <div class="tbtn" style="left:858px;width:53px"></div><div class="tbtn" style="left:911px;width:4px;border-left:0"></div>
 <div class="tbtn" style="left:920px;width:58px"></div>
 <svg style="left:11px;top:6px" width="28" height="27"><use href="#winlogo"/></svg><svg style="left:64px;top:3px" width="34" height="33"><use href="#ie"/></svg><svg style="left:123px;top:6px" width="33" height="28"><use href="#explorer"/></svg><svg style="left:190px;top:5px" width="30" height="30"><use href="#store"/></svg><svg style="left:251px;top:4px" width="32" height="32"><use href="#firefox"/></svg>
 <svg style="left:312px;top:4px" width="34" height="32"><use href="#ssms"/></svg><svg style="left:376px;top:5px" width="32" height="30"><use href="#vs"/></svg><svg style="left:437px;top:4px" width="32" height="32"><use href="#chrome"/></svg><svg style="left:499px;top:4px" width="32" height="32"><use href="#chrome"/></svg><svg style="left:453px;top:20px" width="16" height="16"><use href="#avatar1"/></svg><svg style="left:515px;top:20px" width="16" height="16"><use href="#avatar2"/></svg><svg style="left:563px;top:5px" width="28" height="28"><use href="#ps"/></svg><svg style="left:625px;top:4px" width="28" height="28"><use href="#dw"/></svg>
 <svg style="left:685px;top:4px" width="32" height="32"><use href="#fz"/></svg><svg style="left:748px;top:5px" width="30" height="30"><use href="#vmware"/></svg><svg style="left:809px;top:4px" width="32" height="32"><use href="#globe"/></svg><svg style="left:868px;top:5px" width="32" height="30"><use href="#notepad"/></svg><svg style="left:934px;top:5px" width="32" height="30"><use href="#word"/></svg>
 <div style="left:1066px;top:0;width:65px;height:20px;background:#ecea8e;border:1px solid #77774a"></div>
 <div style="left:1066px;top:19px;width:65px;height:21px;background:#ecea8e;border:1px solid #77774a"></div>
 <div class="s" style="left:1082px;top:3px;font-size:11.500px;letter-spacing:-0.3px;color:#b8501a">0.1 KB/s</div>
 <div class="s" style="left:1082px;top:22px;font-size:11.500px;letter-spacing:-0.3px;color:#2c8a1c">0.0 KB/s</div>
 <svg style="left:1070px;top:3px" width="10" height="12" viewBox="0 0 10 12"><path d="M3.500 0 H6.500 V5 H9.500 L5 10 L0.500 5 H3.500 Z" fill="#f08a58"/><path d="M0.500 11.500 H9.500" stroke="#c7c0a0" stroke-width="1"/></svg>
 <svg style="left:1070px;top:23px" width="10" height="12" viewBox="0 0 10 12"><path d="M3.500 10 H6.500 V5 H9.500 L5 0 L0.500 5 H3.500 Z" fill="#3cb030"/><path d="M0.500 11.500 H9.500" stroke="#c7c0a0" stroke-width="1"/></svg>
 <svg style="left:1137px;top:18px" width="9" height="6" viewBox="0 0 9 6"><path d="M0 6 L4.500 0.500 L9 6 Z" fill="#fff"/></svg>
 <svg style="left:1156px;top:12px" width="18" height="18"><use href="#tflag"/></svg><svg style="left:1180px;top:12px" width="18" height="16"><use href="#tnet"/></svg><svg style="left:1207px;top:12px" width="12" height="18"><use href="#tvol"/></svg><svg style="left:1228px;top:12px" width="18" height="18"><use href="#tpow"/></svg>
 <div class="s" style="left:1259px;top:13px;color:#fff;font-size:11.5px;letter-spacing:-0.6px">ENG</div>
 <svg style="left:1294px;top:4px" width="58" height="34"><use href="#clock"/></svg>
 <div style="left:1364px;top:0;width:2px;height:40px;background:#b6c3cb"></div>
</div>
</div>

</body>
</html>
